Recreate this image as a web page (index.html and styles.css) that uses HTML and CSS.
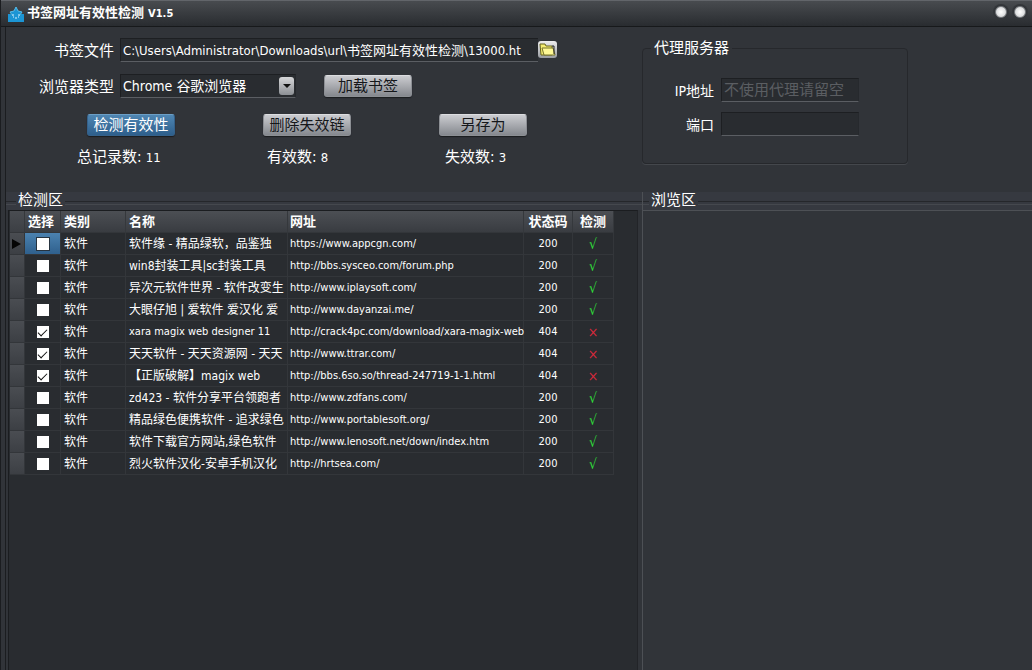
FILE: index.html
```html
<!DOCTYPE html>
<html lang="zh-CN">
<head>
  <meta charset="UTF-8">
  <meta name="viewport" content="width=device-width, initial-scale=1.0">
  <title>书签网址有效性检测 V1.5</title>
  <link rel="stylesheet" href="styles.css">
</head>
<body>
  <div class="window">
    <header class="titlebar">
      <svg class="logo" width="16" height="16" viewBox="0 0 16 16">
        <path d="M8 1l2 4 4 1-2 3v3H4V9L2 6l4-1z" fill="#1c95d4" stroke="#55bdec"/>
        <path d="M0 8h3l1 2h8l1-2h3v8H0z" fill="#1c95d4"/>
        <path d="M4 9h2M10 9h2M5 11h1M7 12h2M10 11h1" stroke="#d8f2ff"/>
      </svg>
      <h1>书签网址有效性检测 <span>V1.5</span></h1>
      <div class="window-buttons">
        <button class="dot" aria-label="最小化"></button>
        <button class="dot" aria-label="关闭"></button>
      </div>
    </header>

    <main>
      <section class="controls">
        <div class="form">
          <div class="row">
            <label for="file">书签文件</label>
            <input class="field path" id="file" type="text" value="C:\Users\Administrator\Downloads\url\书签网址有效性检测\13000.ht">
            <button class="browse" aria-label="打开文件">
              <svg width="17" height="15" viewBox="0 0 17 15">
                <path d="M1 2h5l1 2h6v9H2z" fill="#f4ed72" stroke="#68651d"/>
                <path d="M3 6h11l2 7H5z" fill="#fff995" stroke="#77732a"/>
                <path d="M13 4h2v8" fill="none" stroke="#222"/>
              </svg>
            </button>
          </div>
          <div class="row">
            <label for="browser">浏览器类型</label>
            <div class="select-box">
              <select class="field" id="browser">
                <option>Chrome 谷歌浏览器</option>
              </select>
              <span class="arrow"></span>
            </div>
            <button class="button load">加载书签</button>
          </div>
          <div class="actions">
            <button class="button primary">检测有效性</button>
            <button class="button">删除失效链</button>
            <button class="button">另存为</button>
          </div>
          <div class="counts">
            <span>总记录数: <b>11</b></span>
            <span>有效数: <b>8</b></span>
            <span>失效数: <b>3</b></span>
          </div>
        </div>

        <fieldset class="proxy">
          <legend>代理服务器</legend>
          <div class="row">
            <label for="ip">IP地址</label>
            <input class="field" id="ip" type="text" placeholder="不使用代理请留空">
          </div>
          <div class="row">
            <label for="port">端口</label>
            <input class="field" id="port" type="text">
          </div>
        </fieldset>
      </section>

      <section class="pane check-pane">
        <h2>检测区</h2>
        <div class="pane-body">
          <table>
            <thead>
              <tr>
                <th class="marker"></th>
                <th class="pick">选择</th>
                <th class="kind">类别</th>
                <th class="name">名称</th>
                <th class="url">网址</th>
                <th class="status">状态码</th>
                <th class="result">检测</th>
              </tr>
            </thead>
            <tbody>
              <tr class="current">
                <td class="marker"><span class="pointer"></span></td>
                <td class="pick"><input type="checkbox" aria-label="选择"></td>
                <td>软件</td>
                <td>软件缘 - 精品绿软，品鉴独</td>
                <td class="url">https://www.appcgn.com/</td>
                <td class="status">200</td>
                <td class="result ok">√</td>
              </tr>
              <tr>
                <td class="marker"></td>
                <td class="pick"><input type="checkbox" aria-label="选择"></td>
                <td>软件</td>
                <td>win8封装工具|sc封装工具</td>
                <td class="url">http://bbs.sysceo.com/forum.php</td>
                <td class="status">200</td>
                <td class="result ok">√</td>
              </tr>
              <tr>
                <td class="marker"></td>
                <td class="pick"><input type="checkbox" aria-label="选择"></td>
                <td>软件</td>
                <td>异次元软件世界 - 软件改变生</td>
                <td class="url">http://www.iplaysoft.com/</td>
                <td class="status">200</td>
                <td class="result ok">√</td>
              </tr>
              <tr>
                <td class="marker"></td>
                <td class="pick"><input type="checkbox" aria-label="选择"></td>
                <td>软件</td>
                <td>大眼仔旭 | 爱软件 爱汉化 爱</td>
                <td class="url">http://www.dayanzai.me/</td>
                <td class="status">200</td>
                <td class="result ok">√</td>
              </tr>
              <tr>
                <td class="marker"></td>
                <td class="pick"><input type="checkbox" aria-label="选择" checked></td>
                <td>软件</td>
                <td class="latin">xara magix web designer 11</td>
                <td class="url">http://crack4pc.com/download/xara-magix-web</td>
                <td class="status">404</td>
                <td class="result bad">×</td>
              </tr>
              <tr>
                <td class="marker"></td>
                <td class="pick"><input type="checkbox" aria-label="选择" checked></td>
                <td>软件</td>
                <td>天天软件 - 天天资源网 - 天天</td>
                <td class="url">http://www.ttrar.com/</td>
                <td class="status">404</td>
                <td class="result bad">×</td>
              </tr>
              <tr>
                <td class="marker"></td>
                <td class="pick"><input type="checkbox" aria-label="选择" checked></td>
                <td>软件</td>
                <td>【正版破解】magix web</td>
                <td class="url">http://bbs.6so.so/thread-247719-1-1.html</td>
                <td class="status">404</td>
                <td class="result bad">×</td>
              </tr>
              <tr>
                <td class="marker"></td>
                <td class="pick"><input type="checkbox" aria-label="选择"></td>
                <td>软件</td>
                <td>zd423 - 软件分享平台领跑者</td>
                <td class="url">http://www.zdfans.com/</td>
                <td class="status">200</td>
                <td class="result ok">√</td>
              </tr>
              <tr>
                <td class="marker"></td>
                <td class="pick"><input type="checkbox" aria-label="选择"></td>
                <td>软件</td>
                <td>精品绿色便携软件 - 追求绿色</td>
                <td class="url">http://www.portablesoft.org/</td>
                <td class="status">200</td>
                <td class="result ok">√</td>
              </tr>
              <tr>
                <td class="marker"></td>
                <td class="pick"><input type="checkbox" aria-label="选择"></td>
                <td>软件</td>
                <td>软件下载官方网站,绿色软件</td>
                <td class="url">http://www.lenosoft.net/down/index.htm</td>
                <td class="status">200</td>
                <td class="result ok">√</td>
              </tr>
              <tr>
                <td class="marker"></td>
                <td class="pick"><input type="checkbox" aria-label="选择"></td>
                <td>软件</td>
                <td>烈火软件汉化-安卓手机汉化</td>
                <td class="url">http://hrtsea.com/</td>
                <td class="status">200</td>
                <td class="result ok">√</td>
              </tr>
            </tbody>
          </table>
        </div>
      </section>

      <section class="pane view-pane">
        <h2>浏览区</h2>
        <div class="pane-body"></div>
      </section>
    </main>
  </div>
</body>
</html>
```
FILE: styles.css
```css
* {
  box-sizing: border-box;
}

body {
  margin: 0;
  background: #313439;
  color: #fff;
  font-family: "DejaVu Sans Condensed", "Noto Sans CJK SC", sans-serif;
  font-size: 15px;
}

button, input, select {
  font-family: inherit;
  font-size: inherit;
  color: inherit;
  margin: 0;
}

.window {
  display: flex;
  flex-direction: column;
  min-height: 100vh;
  border-left: 1px solid #1b1d20;
}

/* Title bar */
.titlebar {
  display: flex;
  align-items: center;
  height: 27px;
  padding: 0 6px 0 7px;
  background: linear-gradient(#484b4f, #292c30);
  border-top: 1px solid #62656a;
  border-bottom: 1px solid #17191b;
}

.titlebar h1 {
  flex: 1;
  margin: 0 0 0 3px;
  font-size: 13px;
  line-height: 20px;
}

.titlebar h1 span {
  font-size: 11px;
}

.window-buttons {
  display: flex;
  gap: 7px;
  margin-bottom: 3px;
}

.dot {
  width: 12px;
  height: 12px;
  padding: 0;
  border: 1px solid #777a7e;
  border-radius: 50%;
  background: radial-gradient(#fff, #c9cbcd);
  box-shadow: 0 0 0 2px #33363a;
}

main {
  flex: 1;
  display: grid;
  grid-template-columns: 62fr 38fr;
  grid-template-rows: auto 1fr;
  margin-left: 4px;
  border-left: 1px solid #1b1d20;
}

/* Top area */
.controls {
  grid-column: 1 / -1;
  display: grid;
  grid-template-columns: 62fr 38fr;
  padding: 10px 0 22px;
}

.row {
  display: flex;
  align-items: center;
}

.form .row {
  height: 25px;
  margin-bottom: 11px;
}

.form label {
  width: 108px;
  margin-right: 6px;
  text-align: right;
}

.field {
  height: 24px;
  padding: 0 2px;
  border: 1px solid #1d1f22;
  border-right-color: #26292d;
  border-bottom-color: #5b5e63;
  border-radius: 0;
  background: #292c30;
  font-size: 14px;
  outline: none;
}

.path {
  width: 418px;
  border-right: none;
  font-size: 13px;
}

.browse {
  display: flex;
  justify-content: center;
  align-items: center;
  width: 19px;
  height: 17px;
  padding: 0;
  border: none;
  border-radius: 3px;
  background: linear-gradient(#eee, #999ca1);
}

.select-box {
  position: relative;
  width: 176px;
}

.select-box select {
  display: block;
  width: 100%;
  appearance: none;
}

.arrow {
  position: absolute;
  top: 3px;
  right: 2px;
  display: flex;
  justify-content: center;
  align-items: center;
  width: 15px;
  height: 18px;
  border-radius: 3px;
  background: linear-gradient(#d6d7d9, #8d9095);
  pointer-events: none;
}

.arrow::before {
  content: "";
  border: 4px solid transparent;
  border-top-color: #111;
  border-bottom: none;
}

.button {
  width: 88px;
  height: 22px;
  padding: 0;
  border: 1px solid #8c8f94;
  border-top-color: #dcdde0;
  border-radius: 3px;
  background: linear-gradient(#cbccd0, #85888e);
  box-shadow: 0 1px 1px #1b1d20;
  color: #15171a;
  line-height: 18px;
}

.primary {
  border-color: #35618a;
  border-top-color: #6c9fc6;
  background: linear-gradient(#4f86b3, #2e5f8c);
  color: #fff;
}

.load {
  margin-left: 28px;
}

.actions {
  display: grid;
  grid-template-columns: repeat(3, 88px);
  column-gap: 88px;
  padding: 5px 0 0 81px;
}

.counts {
  display: grid;
  grid-template-columns: 190px 178px auto;
  padding: 9px 0 0 71px;
  line-height: 24px;
  white-space: nowrap;
}

.counts b {
  font-size: 13px;
  font-weight: normal;
}

.proxy {
  align-self: start;
  width: 266px;
  height: 126px;
  margin: 1px 0 0;
  padding: 20px 0 0 30px;
  border: 1px solid #26282c;
  border-radius: 4px;
  box-shadow: 0 1px 0 #44474c;
}

.proxy legend {
  height: 20px;
  margin-left: -22px;
  padding: 0 3px;
  line-height: 20px;
}

.proxy .row {
  height: 24px;
  margin-bottom: 10px;
}

.proxy label {
  width: 41px;
  margin-right: 7px;
  text-align: right;
  font-size: 14px;
  white-space: nowrap;
}

.proxy .field {
  width: 138px;
  font-size: 15px;
}

.field::placeholder {
  color: #5b5e62;
}

/* Bottom panes */
.pane {
  display: flex;
  flex-direction: column;
  min-width: 0;
}

.pane h2 {
  display: flex;
  align-items: center;
  gap: 2px;
  height: 18px;
  margin: 0;
  padding-bottom: 2px;
  background: #363940;
  font-size: 15px;
  font-weight: normal;
  line-height: 16px;
}

.pane h2::before, .pane h2::after {
  content: "";
  height: 2px;
  margin-top: 6px;
  border-top: 1px solid #25272b;
  border-bottom: 1px solid #45484e;
}

.pane h2::before {
  width: 10px;
}

.pane h2::after {
  flex: 1;
}

.pane-body {
  flex: 1;
  border-top: 1px solid #1b1d20;
}

.check-pane .pane-body {
  margin-left: 2px;
  margin-right: 4px;
  padding-left: 1px;
  background: #292c30;
  border-left: 1px solid #1b1d20;
  border-right: 1px solid #222428;
}

.view-pane {
  border-left: 1px solid #4d5055;
}

.view-pane h2::before {
  width: 6px;
}

.view-pane .pane-body {
  border-top-color: #4d5055;
}

/* Result table */
table {
  width: 604px;
  table-layout: fixed;
  border-spacing: 0;
  font-size: 12px;
}

th, td {
  height: 22px;
  padding: 0 0 0 3px;
  border-right: 1px solid #33363a;
  border-bottom: 1px solid #33363a;
  line-height: 20px;
  text-align: left;
  white-space: nowrap;
}

th {
  border-right-color: #35383c;
  background: linear-gradient(#4c4f54, #393c41);
  font-size: 13px;
}

.marker {
  width: 15px;
  padding: 0 0 0 2px;
  background: linear-gradient(#4a4d52, #3c3f44);
}

.pick {
  width: 36px;
}

td.pick {
  padding: 0;
  text-align: center;
}

.kind {
  width: 65px;
}

.name {
  width: 162px;
}

.url {
  width: 236px;
  padding-left: 2px;
}

td.url, .latin, td.status {
  font-size: 11px;
}

.status {
  width: 49px;
  padding: 0;
  text-align: center;
}

.result {
  width: 41px;
  padding: 0;
  text-align: center;
}

td.result {
  font-size: 14px;
}

.ok {
  color: #2fdc3a;
}

.bad {
  color: #d8293c;
}

.current .pick {
  background: linear-gradient(#4b82b0, #2f608d);
}

.pointer {
  display: block;
  border: 5px solid transparent;
  border-left: 9px solid #050505;
  border-right: none;
}

input[type="checkbox"] {
  display: inline-grid;
  place-items: center;
  width: 12px;
  height: 12px;
  border: 1px solid #fff;
  background: #fff;
  appearance: none;
  vertical-align: middle;
}

.current input[type="checkbox"] {
  outline: 1px solid #26333f;
}

input[type="checkbox"]:checked::before {
  content: "";
  width: 8px;
  height: 4px;
  margin-bottom: 2px;
  border-left: 1px solid #111;
  border-bottom: 1px solid #111;
  transform: rotate(-45deg);
}
```
